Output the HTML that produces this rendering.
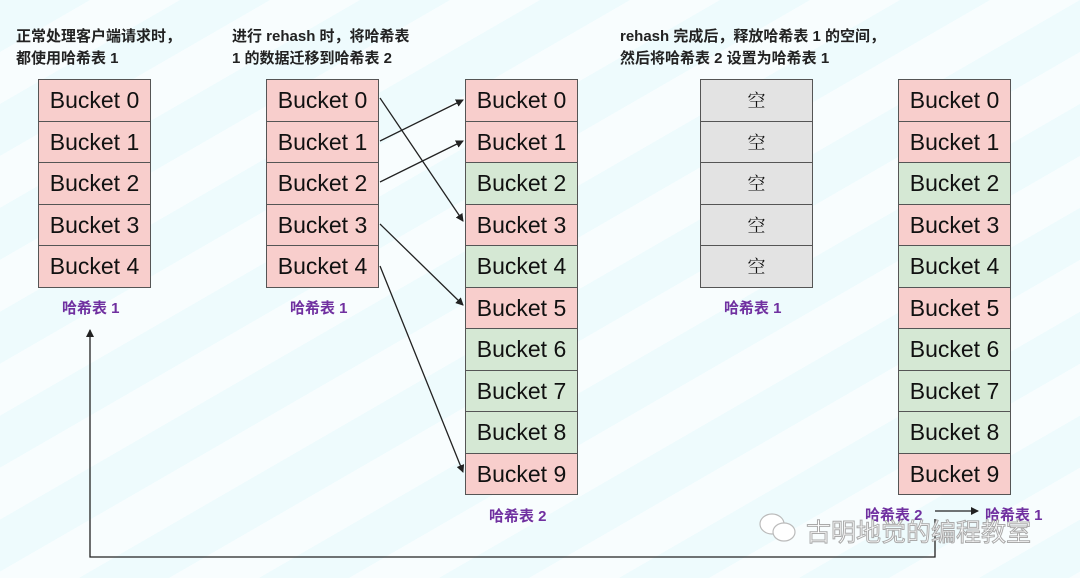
<!DOCTYPE html>
<html><head><meta charset="utf-8"><style>
body{margin:0;width:1080px;height:578px;overflow:hidden;position:relative;background:repeating-linear-gradient(150deg,#eefbfd 0 45px,#f8fdfe 45px 90px);font-family:"Liberation Sans","Noto Sans CJK SC",sans-serif}
.t{position:absolute;font-weight:bold;font-size:15px;line-height:22px;color:#222}
.tb{position:absolute;width:113px}
.c{height:40.5px;border:1px solid #555;border-top:none;box-sizing:content-box;text-align:center;font-size:23px;line-height:40px;color:#111;font-family:"Comic Sans MS","Liberation Sans",sans-serif}
.c:first-child{border-top:1px solid #555}
.p{background:#f8cecc}.g{background:#d5e8d4}.e{background:#e3e3e3;font-family:"Noto Serif CJK SC",serif;font-size:18px}
.l{position:absolute;color:#7030a0;font-weight:bold;font-size:15px}
</style></head><body>
<div class="t" style="left:16px;top:26px">正常处理客户端请求时，<br>都使用哈希表 1</div>
<div class="t" style="left:232px;top:26px">进行 rehash 时，将哈希表<br>1 的数据迁移到哈希表 2</div>
<div class="t" style="left:620px;top:26px">rehash 完成后，释放哈希表 1 的空间，<br>然后将哈希表 2 设置为哈希表 1</div>

<div class="tb" style="left:38px;top:79px"><div class="c p">Bucket 0</div><div class="c p">Bucket 1</div><div class="c p">Bucket 2</div><div class="c p">Bucket 3</div><div class="c p">Bucket 4</div></div>
<div class="tb" style="left:266px;top:79px"><div class="c p">Bucket 0</div><div class="c p">Bucket 1</div><div class="c p">Bucket 2</div><div class="c p">Bucket 3</div><div class="c p">Bucket 4</div></div>
<div class="tb" style="left:465px;top:79px"><div class="c p">Bucket 0</div><div class="c p">Bucket 1</div><div class="c g">Bucket 2</div><div class="c p">Bucket 3</div><div class="c g">Bucket 4</div><div class="c p">Bucket 5</div><div class="c g">Bucket 6</div><div class="c g">Bucket 7</div><div class="c g">Bucket 8</div><div class="c p">Bucket 9</div></div>
<div class="tb" style="left:700px;top:79px"><div class="c e">空</div><div class="c e">空</div><div class="c e">空</div><div class="c e">空</div><div class="c e">空</div></div>
<div class="tb" style="left:898px;top:79px"><div class="c p">Bucket 0</div><div class="c p">Bucket 1</div><div class="c g">Bucket 2</div><div class="c p">Bucket 3</div><div class="c g">Bucket 4</div><div class="c p">Bucket 5</div><div class="c g">Bucket 6</div><div class="c g">Bucket 7</div><div class="c g">Bucket 8</div><div class="c p">Bucket 9</div></div>

<div class="l" style="left:62px;top:297px">哈希表 1</div>
<div class="l" style="left:290px;top:297px">哈希表 1</div>
<div class="l" style="left:489px;top:505px">哈希表 2</div>
<div class="l" style="left:724px;top:297px">哈希表 1</div>
<div class="l" style="left:865px;top:504px">哈希表 2</div>
<div class="l" style="left:985px;top:504px">哈希表 1</div>

<svg style="position:absolute;left:0;top:0" width="1080" height="578">
<defs><marker id="a" markerWidth="8" markerHeight="8" refX="7" refY="4" orient="auto" markerUnits="userSpaceOnUse"><path d="M0,0L8,4L0,8z" fill="#222"/></marker></defs>
<g stroke="#222" stroke-width="1.3" fill="none">
<path d="M380,98L463,221" marker-end="url(#a)"/>
<path d="M380,141L463,100" marker-end="url(#a)"/>
<path d="M380,182L463,141" marker-end="url(#a)"/>
<path d="M380,224L463,305" marker-end="url(#a)"/>
<path d="M380,266L463,472" marker-end="url(#a)"/>
<path d="M935,511L978,511" marker-end="url(#a)"/>
<path d="M935,519L935,557L90,557L90,330" marker-end="url(#a)"/>
</g>
<g fill="#fff" stroke="#bbb" stroke-width="1.2">
<ellipse cx="772" cy="524" rx="12" ry="10"/>
<ellipse cx="784" cy="532" rx="11" ry="9"/>
</g>
</svg>
<div style="position:absolute;left:806px;top:513px;font-size:25px;color:#fff;-webkit-text-stroke:1px #aaa;font-family:'Noto Sans CJK SC',sans-serif">古明地觉的编程教室</div>
</body></html>
